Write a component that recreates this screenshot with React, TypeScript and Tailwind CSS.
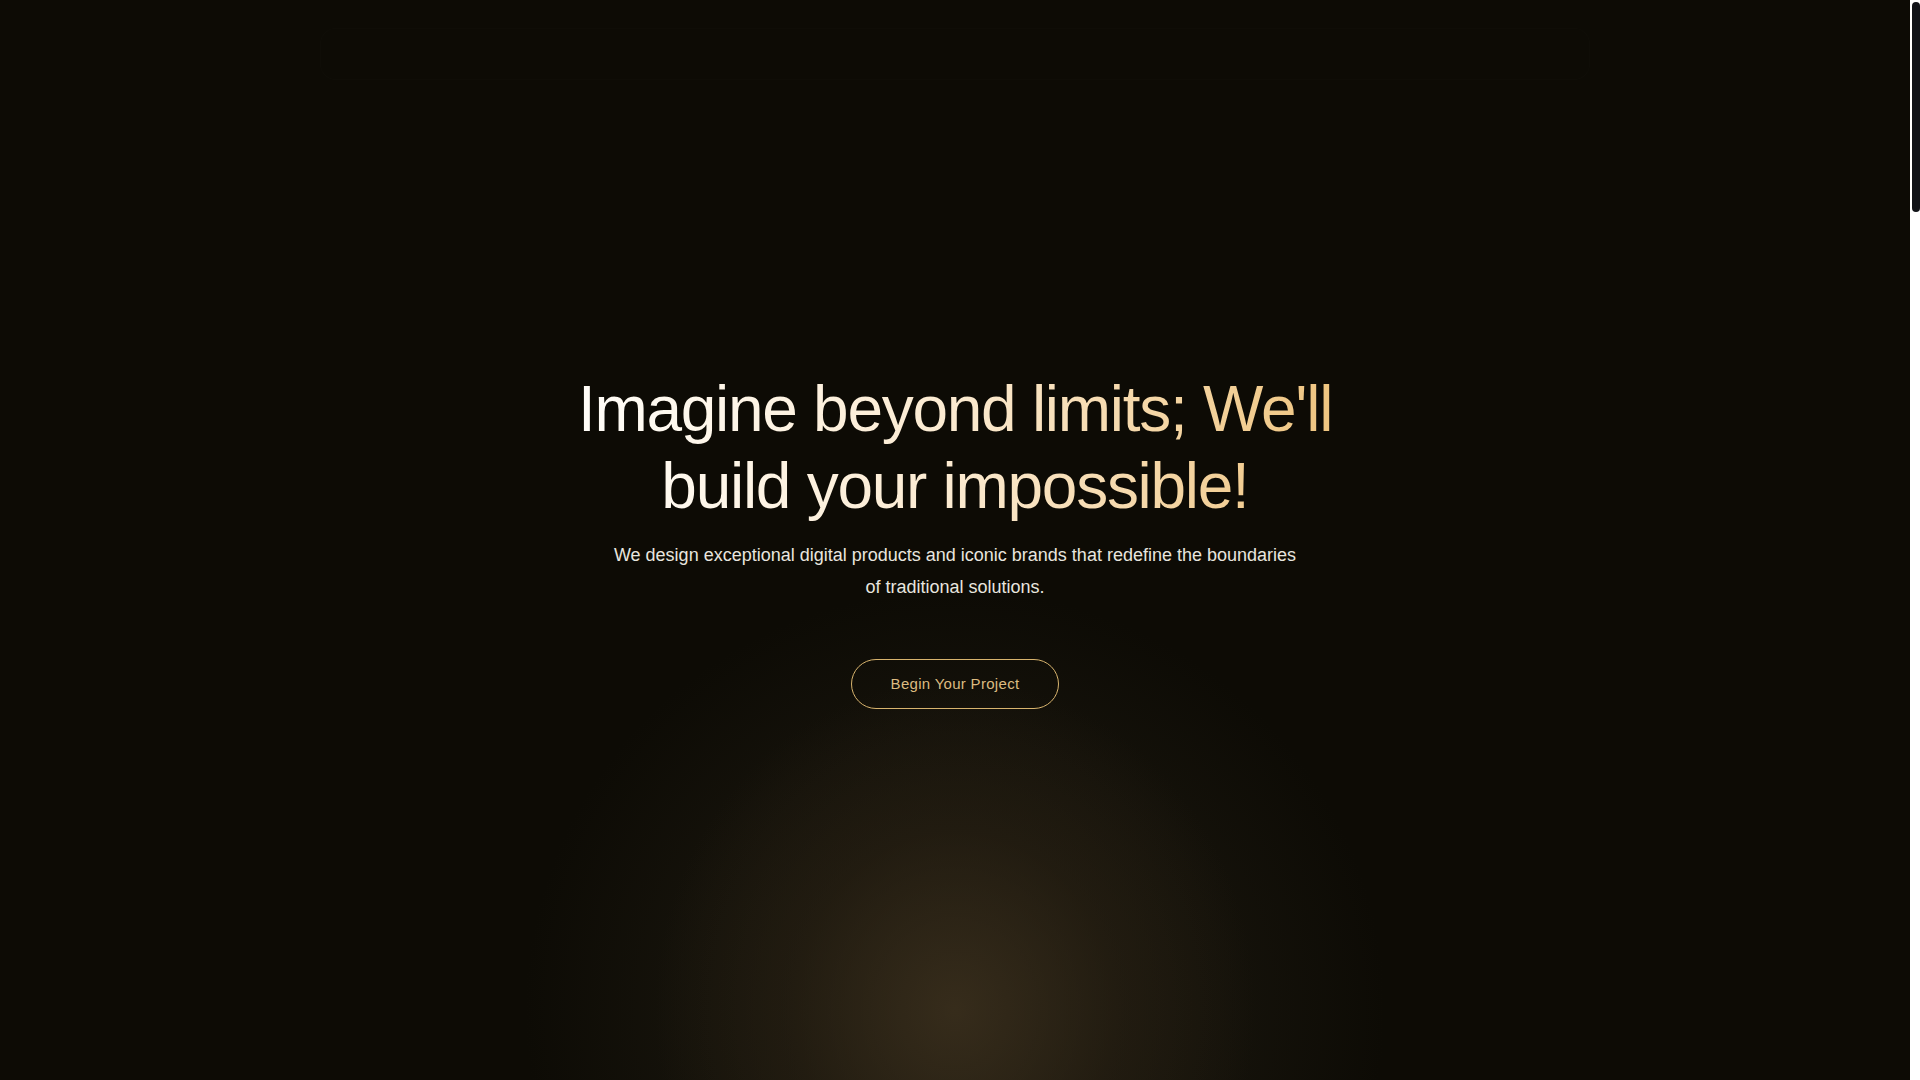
export default function App() {
  return (
    <div className="relative h-screen w-full overflow-y-auto bg-[#0d0b05] pr-[10px] text-white [font-family:'Liberation_Sans',Arial,sans-serif]">
      <section className="relative flex h-screen w-full flex-col items-center justify-center overflow-hidden">
        {/* bottom glow */}
        <div className="pointer-events-none absolute inset-0 bg-[radial-gradient(ellipse_300px_330px_at_50%_1010px,rgba(60,48,30,0.8),rgba(42,33,20,0.5)_55%,transparent_100%),radial-gradient(ellipse_430px_420px_at_50%_1010px,rgba(31,28,16,1),rgba(23,20,12,0.75)_65%,transparent_100%)]" />

        {/* faint top bar */}
        <header className="absolute left-1/2 top-[28px] h-[52px] w-[1270px] -translate-x-1/2 rounded-2xl border border-white/[0.012] bg-white/[0.004]" />

        <div className="relative flex flex-col items-center text-center">
          <h1 className="bg-gradient-to-r from-[#fffdf8] via-[#fbead0] to-[#efc580] bg-clip-text text-[64px] font-normal leading-[1.2] tracking-[-0.02em] text-transparent">
            Imagine beyond limits; We'll
            <br />
            build your impossible!
          </h1>
          <p className="mt-4 max-w-[692px] text-[18px] leading-[1.75] text-[#e8e5df]">
            We design exceptional digital products and iconic brands that redefine the boundaries
            of traditional solutions.
          </p>
          <button className="mt-14 flex h-[50px] items-center rounded-full border border-[#d8b46e] bg-transparent px-[39px] text-[15px] tracking-[0.02em] text-[#dcbb80]">
            Begin Your Project
          </button>
        </div>
      </section>

      <div className="h-[4370px] w-full" />

      {/* scrollbar */}
      <div className="fixed right-0 top-0 h-screen w-[10px] bg-white">
        <div className="ml-[2px] mt-[2px] h-[210px] w-[8px] rounded-full bg-[#111318]" />
      </div>
    </div>
  )
}
